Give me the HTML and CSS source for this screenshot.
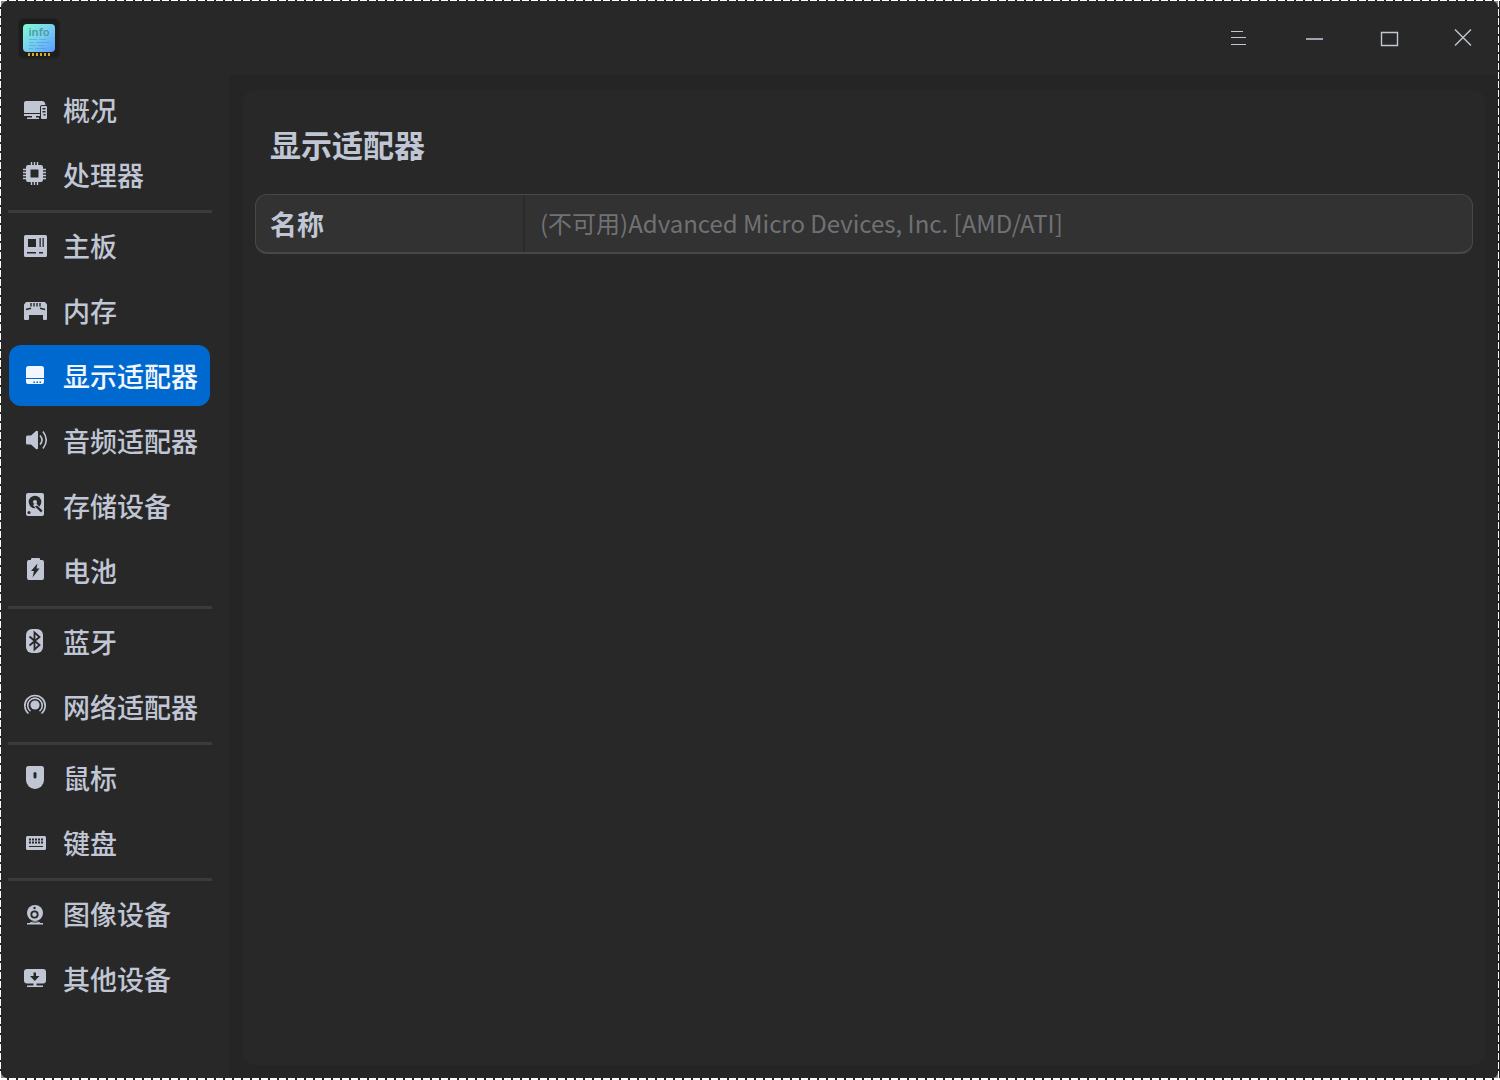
FILE: index.html
```html
<!DOCTYPE html>
<html lang="zh-CN">
<head>
<meta charset="utf-8">
<title>设备管理器</title>
<meta name="viewport" content="width=device-width, initial-scale=1">
<link rel="stylesheet" href="styles.css">
</head>
<body>
<div class="window">
  <header class="titlebar">
    <svg class="app-icon" viewBox="0 0 44 44" role="img" aria-label="设备管理器">
      <defs>
        <linearGradient id="screen" x1="0" y1="0" x2="1" y2="1">
          <stop offset="0" stop-color="#7dfbd0"/><stop offset=".5" stop-color="#78d0f0"/><stop offset="1" stop-color="#5a98ff"/>
        </linearGradient>
      </defs>
      <rect x="1" y="1" width="42" height="41" rx="6" fill="#222"/>
      <rect x="2" y="2" width="40" height="38" rx="5" fill="#1d1d1d"/>
      <rect x="6" y="7" width="32" height="28" rx="4" fill="url(#screen)"/>
      <text class="app-icon-text" x="22" y="19" text-anchor="middle">info</text>
      <path d="M12 22.500h8m2 0h7M12 25.500h5m2 0h13M12 28.500h7m2 0h6M12 31.500h4m2 0h11" stroke="#4b94c8" opacity=".5"/>
      <path d="M11 37.500h2m2 0h2m2 0h2m2 0h2m2 0h2m2 0h2" stroke="#d8ab1c" stroke-width="3"/>
    </svg>
    <div class="window-controls">
      <button class="control" type="button" aria-label="菜单"><svg viewBox="0 0 24 24"><path d="M5 5.500h12M5 11.500h15M5 18.500h15"/></svg></button>
      <button class="control" type="button" aria-label="最小化"><svg viewBox="0 0 24 24"><path class="thick" d="M5 13h17"/></svg></button>
      <button class="control" type="button" aria-label="最大化"><svg viewBox="0 0 24 24"><path class="frame" d="M5.500 6.500h16v13h-16z"/></svg></button>
      <button class="control" type="button" aria-label="关闭"><svg viewBox="0 0 24 24"><path class="frame" d="M4 3.500l16 16M20 3.500l-16 16"/></svg></button>
    </div>
  </header>
  <div class="body">
    <nav class="sidebar" aria-label="设备">
      <ul class="group">
        <li><a class="item" href="#overview"><svg viewBox="0 0 24 24"><path d="M3 4h16q3 0 3.500 4H19q-2 0-2 2v6H1V6q0-2 2-2z"/><path d="M1 17h16v2h-4v1.500h3V22H4v-1.500h5V19H1z"/><path class="cut" d="M1 16.500h16"/><path fill-rule="evenodd" d="M19 9h4q1 0 1 1v11q0 1-1 1h-4q-1 0-1-1V10q0-1 1-1zm.500 2v1.500h3V11zm0 3v1.500h3V14zm1 3v1.500h2V17z"/></svg><span>概况</span></a></li>
        <li><a class="item" href="#cpu"><svg viewBox="0 0 24 24"><path fill-rule="evenodd" d="M5 3h13q2 0 2 2v13q0 2-2 2H5q-2 0-2-2V5q0-2 2-2zm2.500 4.500v8h8v-8z"/><path class="line pins" d="M8.500 0v3m0 17v3M11.500 0v3m0 17v3M14.500 0v3m0 17v3M0 7.500h3m17 0h3M0 10.500h3m17 0h3M0 13.500h3m17 0h3M0 16.500h3m17 0h3"/></svg><span>处理器</span></a></li>
      </ul>
      <ul class="group">
        <li><a class="item" href="#board"><svg viewBox="0 0 24 24"><path fill-rule="evenodd" d="M2.500 2h20Q24 2 24 3.500v19q0 1.500-1.500 1.500h-20Q1 24 1 22.500v-19Q1 2 2.500 2zM5 6v8h8V6zm11.500-1v9h1.300V5zm3 0v9h1.300V5zM4 19v1.500h9V19zm12 0v1.500h4V19z"/></svg><span>主板</span></a></li>
        <li><a class="item" href="#memory"><svg viewBox="0 0 24 24"><path d="M3 4h19l2 2.500V21q0 1-1 1h-2q-1 0-1-1v-4H6v4q0 1-1 1H2q-1 0-1-1V6.500z"/><path class="cut ticks" d="M8 5v3.500m3-3.500v3.500m3-3.500v3.500m3-3.500v3.500M3 11.500l5-1.200m9 0l5 1.200"/></svg><span>内存</span></a></li>
        <li><a class="item active" href="#display" aria-current="page"><svg viewBox="0 0 24 24"><path d="M5.500 3h13Q21 3 21 5.500V15H3V5.500Q3 3 5.500 3z"/><path fill-rule="evenodd" d="M3 16h18v3q0 2-2 2H5q-2 0-2-2zm7.500 2.500V20H12v-1.500zm3 0V20H15v-1.500zm3 0V20H18v-1.500z"/></svg><span>显示适配器</span></a></li>
        <li><a class="item" href="#audio"><svg viewBox="0 0 24 24"><path d="M4.500 7.500H8l5-4.500q2-1 2 1v16q0 2-2 1l-5-4.500H4.500Q3 16.500 3 15V9q0-1.500 1.500-1.500z"/><path class="line" d="M17 7.500q4 4.500 0 9M20 3.500q6.500 8.500 0 17"/></svg><span>音频适配器</span></a></li>
        <li><a class="item" href="#storage"><svg viewBox="0 0 24 24"><rect x="3" y="0" width="18" height="23" rx="2"/><circle class="hole" cx="12" cy="9" r="6.300"/><path d="M10 12l3-2 7 8-3 3z"/><path class="hole" d="M12 13.500l2-1 5.500 5-1.500 2z"/><circle cx="12" cy="9" r="2"/><circle class="hole" cx="6" cy="19.500" r="1.500"/></svg><span>存储设备</span></a></li>
        <li><a class="item" href="#battery"><svg viewBox="0 0 24 24"><path fill-rule="evenodd" d="M9 0h7q1 0 1 1v1h2q2 0 2 2v16q0 2-2 2H6q-2 0-2-2V4q0-2 2-2h2V1q0-1 1-1zm5.500 5.500L8 13h3l-1.500 6.500 7-9h-3z"/></svg><span>电池</span></a></li>
      </ul>
      <ul class="group">
        <li><a class="item" href="#bluetooth"><svg viewBox="0 0 24 24"><rect x="3" y="0" width="17" height="24" rx="6"/><path class="cut bold" d="M6.500 7.500l10 8.500-5 4.500v-17l5 4.500-10 8.500"/></svg><span>蓝牙</span></a></li>
        <li><a class="item" href="#network"><svg viewBox="0 0 24 24"><circle cx="12" cy="11" r="4.600"/><path class="line" d="M7.500 17.200a7.300 7.300 0 1 1 9 0M5.500 19.500a10.200 10.200 0 1 1 13 0"/></svg><span>网络适配器</span></a></li>
      </ul>
      <ul class="group">
        <li><a class="item" href="#mouse"><svg viewBox="0 0 24 24"><path d="M5.500 1h13Q21 1 21 3.500V15a9 9 0 0 1-18 0V3.500Q3 1 5.500 1z"/><rect class="hole" x="10.500" y="7" width="3" height="6.500" rx="1.500"/></svg><span>鼠标</span></a></li>
        <li><a class="item" href="#keyboard"><svg viewBox="0 0 24 24"><rect x="3" y="6" width="20" height="14" rx="1.500"/><path class="cut dots" d="M6 9.500h14.500M6 12.500h14.500"/><path class="cut" d="M6 16.500h14"/></svg><span>键盘</span></a></li>
      </ul>
      <ul class="group">
        <li><a class="item" href="#imaging"><svg viewBox="0 0 24 24"><circle cx="12" cy="12" r="8"/><path d="M8 20h8l1 2h3v1.500H4V22h3z"/><path class="cut" d="M6 20.300q6 1.700 12 0"/><circle class="cut bold" cx="11.500" cy="13.500" r="3.200"/><circle class="hole" cx="11.500" cy="7" r="1.200"/></svg><span>图像设备</span></a></li>
        <li><a class="item" href="#others"><svg viewBox="0 0 24 24"><rect x="1" y="3" width="22" height="14.500" rx="3"/><path d="M10.500 17h3v2.500H20V21H4v-1.500h6.500z"/><path class="hole" d="M10.500 6.500H13V10h3.500L11.800 15 7 10h3.500z"/></svg><span>其他设备</span></a></li>
      </ul>
    </nav>
    <main class="content">
      <section class="panel">
        <h1 class="heading">显示适配器</h1>
        <div class="table-frame">
          <table class="info">
            <tbody>
              <tr><th scope="row">名称</th><td>(不可用)Advanced Micro Devices, Inc. [AMD/ATI]</td></tr>
            </tbody>
          </table>
        </div>
      </section>
    </main>
  </div>
</div>
</body>
</html>
```

FILE: styles.css
```css
:root {
  --surface: #282828;
  --backdrop: #252525;
  --text: #c0c6d4;
  --accent: #0069cf;
}

* {
  box-sizing: border-box;
}

body {
  margin: 0;
  color: var(--text);
  font: 500 27px/26px "Noto Sans CJK SC", "Noto Sans", sans-serif;
  /* dashed outline round the window */
  background:
    repeating-linear-gradient(90deg, #fff 0 7px, #222 7px 9px) top / 100% 1px no-repeat,
    repeating-linear-gradient(90deg, #fff 0 7px, #222 7px 9px) bottom / 100% 2px no-repeat,
    repeating-linear-gradient(#fff 0 7px, #222 7px 9px) left / 1px 100% no-repeat,
    linear-gradient(#222, #222) right / 1px 100% no-repeat,
    repeating-linear-gradient(#fff 0 7px, #222 7px 9px) right / 2px 100% no-repeat,
    #888;
}

.window {
  display: flex;
  flex-direction: column;
  min-height: 100vh;
  border: solid transparent;
  border-width: 1px 2px 2px 1px;
  border-radius: 8px;
  background: var(--backdrop) padding-box;
}

.titlebar {
  display: flex;
  justify-content: space-between;
  align-items: center;
  height: 74px;
  padding-left: 16px;
  border-radius: 8px 8px 0 0;
  background: var(--surface);
}

.app-icon {
  width: 44px;
  height: 44px;
  margin-top: 2px;
}

.app-icon-text {
  font: 600 11px "Noto Sans", sans-serif;
  fill: #4d9aa6;
}

.window-controls {
  display: flex;
}

.control {
  display: grid;
  place-items: center;
  width: 75px;
  height: 74px;
  padding: 0 0 0 5px;
  border: 0;
  background: none;
}

.control svg {
  width: 24px;
  height: 24px;
  fill: none;
  stroke: var(--text);
}

.control .thick {
  stroke-width: 2;
  stroke: #9da3b0;
}

.control .frame {
  stroke-width: 1.4;
}

.body {
  display: flex;
  flex: 1;
}

.sidebar {
  width: 228px;
  padding: 4px 17px 24px 7px;
  border-bottom-left-radius: 8px;
  background: var(--surface);
}

.group {
  display: grid;
  gap: 4px;
  margin: 0;
  padding: 0;
  list-style: none;
}

.group + .group {
  margin-top: 5px;
  padding-top: 2px;
  border-top: 3px solid #3b3b3b;
}

.item {
  display: flex;
  align-items: flex-start;
  gap: 16px;
  padding: 18px 0 17px 14px;
  margin: 0 2px 0 1px;
  border-radius: 12px;
  color: inherit;
  white-space: nowrap;
  text-decoration: none;
}

.item svg {
  flex: none;
  width: 24px;
  height: 24px;
  overflow: visible;
  fill: currentColor;
}

.item .line {
  fill: none;
  stroke: currentColor;
  stroke-width: 1.6;
}

.item .pins {
  stroke-width: 1.4;
}

.item .cut {
  fill: none;
  stroke: var(--surface);
}

.item .ticks {
  stroke-width: 1.4;
}

.item .bold {
  stroke-width: 1.8;
}

.item .dots {
  stroke-width: 2;
  stroke-dasharray: 2 1;
}

.item .hole {
  fill: var(--surface);
}

.item.active {
  background: var(--accent);
  color: #f2f6ff;
}

.content {
  display: flex;
  flex: 1;
  padding: 15px 13px 13px 14px;
}

.panel {
  flex: 1;
  padding: 38px 12px;
  border-radius: 12px;
  background: var(--surface);
}

.heading {
  margin: 0 0 34px;
  padding-left: 15px;
  font-size: 31px;
  line-height: 32px;
}

.table-frame {
  overflow: hidden;
  border: 1px solid #484848;
  border-bottom-width: 2px;
  border-radius: 12px;
  background: #323232;
}

.info {
  width: 100%;
  border-collapse: collapse;
  table-layout: fixed;
}

.info th,
.info td {
  height: 57px;
  padding: 0 15px 0 14px;
  text-align: left;
}

.info th {
  width: 268px;
  border-right: 2px solid #2b2b2b;
}

.info td {
  padding: 0 15px 2px;
  font-size: 24px;
  font-weight: 400;
  color: #707175;
}
```
